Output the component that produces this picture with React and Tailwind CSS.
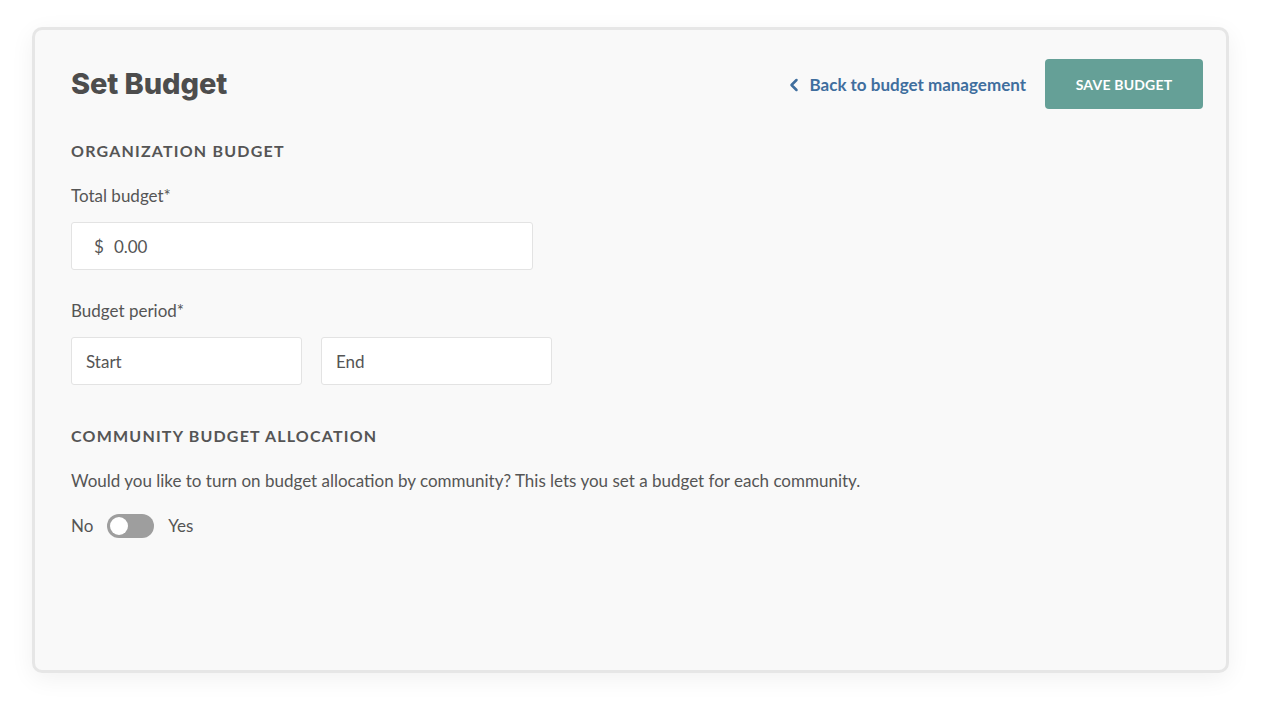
import { ChevronLeft } from 'lucide-react'

const lato = "font-['Lato','Liberation_Sans',sans-serif]"

function Field({ placeholder, prefix, className = '' }) {
  return (
    <div
      className={`flex h-12 items-center rounded-[3px] border border-[#e3e3e3] bg-white px-[14px] pt-[2px] text-[17px] text-[#555] ${className}`}
    >
      {prefix && <span className="ml-2 mr-[10px]">{prefix}</span>}
      <span>{placeholder}</span>
    </div>
  )
}

export default function App() {
  return (
    <div className={`min-h-screen bg-white px-[32px] pt-[27px] pb-[46px] ${lato}`}>
      <div className="flex h-[646px] w-[1197px] flex-col rounded-[10px] border-[3px] border-[#e6e6e6] bg-[#f9f9f9] pt-[29px] pr-[23px] pl-[36px] shadow-[0_6px_24px_rgba(0,0,0,0.06)]">
        <div className="flex h-[50px] items-center justify-between">
          <h1 className="font-['Inter',sans-serif] text-[29px] font-extrabold tracking-[-0.1px] text-[#4d4d4d]">
            Set Budget
          </h1>
          <div className="flex items-center gap-[19px]">
            <a href="#" className="flex items-center gap-[6px] pt-[2px] text-[17px] font-bold text-[#3f6e9e]">
              <ChevronLeft size={20} strokeWidth={3} className="-ml-[1px]" />
              Back to budget management
            </a>
            <button className="h-[50px] w-[158px] rounded-[4px] bg-[#65a097] text-[14px] font-bold tracking-[0.2px] text-white">
              SAVE BUDGET
            </button>
          </div>
        </div>

        <h2 className="mt-[32px] text-[16px] leading-5 font-bold tracking-[1.2px] text-[#555]">
          ORGANIZATION BUDGET
        </h2>
        <label className="mt-[23px] text-[17px] leading-6 text-[#555]">Total budget*</label>
        <Field prefix="$" placeholder="0.00" className="mt-[14px] w-[462px]" />

        <label className="mt-[29px] text-[17px] leading-6 text-[#555]">Budget period*</label>
        <div className="mt-[14px] flex gap-[19px]">
          <Field placeholder="Start" className="w-[231px]" />
          <Field placeholder="End" className="w-[231px]" />
        </div>

        <h2 className="mt-[41px] text-[16px] leading-5 font-bold tracking-[1.2px] text-[#555]">
          COMMUNITY BUDGET ALLOCATION
        </h2>
        <p className="mt-[23px] text-[17px] leading-6 text-[#555]">
          Would you like to turn on budget allocation by community? This lets you set a budget for each community.
        </p>
        <div className="mt-[20px] flex items-center gap-[14px] text-[17px] text-[#555]">
          <span>No</span>
          <div className="flex h-6 w-[47px] items-center rounded-full bg-[#9e9e9e] px-[3px]">
            <div className="h-[18px] w-[18px] rounded-full bg-white" />
          </div>
          <span>Yes</span>
        </div>
      </div>
    </div>
  )
}
